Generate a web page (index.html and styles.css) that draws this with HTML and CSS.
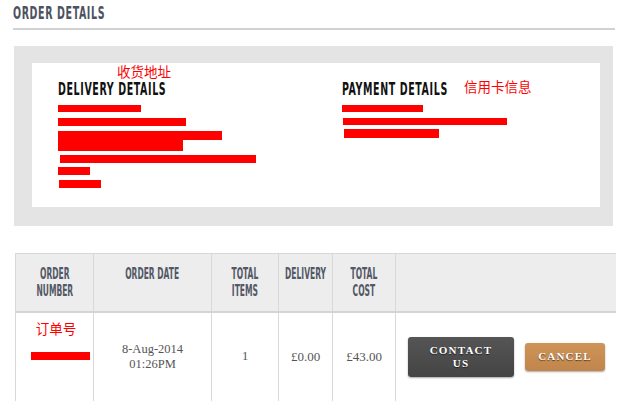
FILE: index.html
```html
<!DOCTYPE html>
<html>
<head>
<meta charset="utf-8">
<link rel="stylesheet" href="styles.css">
</head>
<body>
<div class="page">
  <h1 class="title"><span class="cond">ORDER DETAILS</span></h1>
  <div class="rule"></div>

  <section class="details">
    <div class="card">
      <div class="col delivery">
        <h2 class="heading"><span class="cond">DELIVERY DETAILS</span><span class="note note-abs">收货地址</span></h2>
        <div class="lines">
          <div class="bar b1"></div>
          <div class="bar b2"></div>
          <div class="bar b3"></div>
          <div class="bar b4"></div>
          <div class="bar b5"></div>
          <div class="bar b6"></div>
          <div class="bar b7"></div>
        </div>
      </div>
      <div class="col payment">
        <h2 class="heading"><span class="cond">PAYMENT DETAILS</span><span class="note note-side">信用卡信息</span></h2>
        <div class="lines">
          <div class="bar p1"></div>
          <div class="bar p2"></div>
          <div class="bar p3"></div>
        </div>
      </div>
    </div>
  </section>

  <table class="orders">
    <thead>
      <tr>
        <th class="c1"><div class="hcell"><span class="cond">ORDER<br>NUMBER</span></div></th>
        <th class="c2"><div class="hcell"><span class="cond">ORDER DATE</span></div></th>
        <th class="c3"><div class="hcell"><span class="cond">TOTAL<br>ITEMS</span></div></th>
        <th class="c4"><div class="hcell"><span class="cond">DELIVERY</span></div></th>
        <th class="c5"><div class="hcell"><span class="cond">TOTAL<br>COST</span></div></th>
        <th class="c6"></th>
      </tr>
    </thead>
    <tbody>
      <tr>
        <td class="c1 num-cell">
          <div class="num-stack">
            <span class="note">订单号</span>
            <div class="bar onum"></div>
          </div>
        </td>
        <td class="c2">8-Aug-2014<br>01:26PM</td>
        <td class="c3">1</td>
        <td class="c4">£0.00</td>
        <td class="c5">£43.00</td>
        <td class="c6">
          <div class="actions">
            <button class="btn btn-dark">CONTACT<br>US</button>
            <button class="btn btn-tan">CANCEL</button>
          </div>
        </td>
      </tr>
    </tbody>
  </table>
</div>
</body>
</html>
```

FILE: styles.css
```css
* { box-sizing: border-box; }
html, body { margin: 0; padding: 0; background: #fff; }
body { font-family: "Liberation Serif", serif; overflow: hidden; }

.page { padding: 0 16px 0 13px; width: 631px; }

.cond {
  display: inline-block;
  font-family: "Liberation Sans Narrow", "DejaVu Sans Condensed", "Liberation Sans", sans-serif;
  font-weight: bold;
  transform: scaleX(0.62);
}

.title {
  margin: 0;
  padding-top: 3px;
  height: 28px;
  font-size: 17px;
  line-height: 20px;
  color: #4c5260;
  font-weight: bold;
  letter-spacing: 1px;
  white-space: nowrap;
}
.title .cond { transform-origin: left center; }

.rule { height: 2px; background: #d2d2d2; }

.details {
  margin: 16px 2px 0 1px;
  background: #e4e4e4;
  padding: 17px 13px 19px 18px;
}
.card {
  background: #fff;
  height: 144px;
  display: flex;
  padding: 15px 0 0 26px;
}
.col { position: relative; }
.delivery { width: 284px; }
.heading {
  margin: 0;
  font-size: 17px;
  line-height: 22px;
  color: #111;
  letter-spacing: 1px;
  white-space: nowrap;
  position: relative;
}
.heading .cond { transform-origin: left center; }
.note {
  font-family: "Noto Sans CJK SC", sans-serif;
  color: #f00;
  font-size: 13.5px;
  font-weight: normal;
  letter-spacing: 0;
}
.note-abs { position: absolute; left: 59px; top: -15px; line-height: 16px; }
.note-side { position: absolute; left: 122px; top: 0; line-height: 16px; }

.lines { display: flex; flex-direction: column; padding-top: 3px; }
.bar { background: #f00; }
.b1 { width: 83px; height: 7px; margin-top: 1px; }
.b2 { width: 128px; height: 8px; margin-top: 6px; }
.b3 { width: 164px; height: 9px; margin-top: 5px; }
.b4 { width: 125px; height: 11px; }
.b5 { width: 196px; height: 8px; margin: 4px 0 0 2px; }
.b6 { width: 32px; height: 8px; margin-top: 4px; }
.b7 { width: 42px; height: 8px; margin: 5px 0 0 1px; }
.p1 { width: 81px; height: 7px; margin-top: 1px; }
.p2 { width: 164px; height: 7px; margin: 6px 0 0 1px; }
.p3 { width: 95px; height: 9px; margin: 4px 0 0 2px; }

.orders {
  margin: 27px 0 0 2px;
  border-collapse: collapse;
  width: 600px;
  table-layout: fixed;
}
.orders th {
  background: #ededed;
  color: #525866;
  font-size: 15px;
  line-height: 17px;
  font-weight: bold;
  height: 58px;
  vertical-align: top;
  padding: 12px 0 0;
  text-align: center;
  border: 1px solid #d8d8d8;
  border-bottom: 2px solid #d4d4d4;
  white-space: nowrap;
}
.hcell { display: flex; justify-content: center; }
.orders th .cond { transform: scaleX(0.56); flex: none; }
.orders td {
  height: 90px;
  border: 1px solid #d8d8d8;
  border-top: none;
  text-align: center;
  vertical-align: middle;
  font-size: 12.5px;
  line-height: 15px;
  color: #555;
  padding: 0;
}
.c1 { width: 78px; }
.c2 { width: 118px; }
.c3 { width: 67px; }
.c4 { width: 54px; }
.c5 { width: 63px; }
.c6 { width: 220px; border-right: none !important; }
.orders td.c4, .orders td.c5 { font-size: 13px; }

.orders td.num-cell { vertical-align: top; }
.num-stack {
  display: flex;
  flex-direction: column;
  align-items: center;
  padding-top: 7px;
}
.num-stack .note { font-size: 13.5px; line-height: 17px; margin-left: 3px; }
.onum { width: 59px; height: 8px; margin: 15px 0 0 12px; }

.actions {
  display: flex;
  align-items: center;
  padding-left: 12px;
  gap: 11px;
}
.btn {
  border: none;
  font-family: "Liberation Serif", serif;
  font-weight: bold;
  color: #fff;
  font-size: 11px;
  letter-spacing: 1.2px;
  line-height: 13px;
  text-shadow: 0 1px 1px rgba(0,0,0,0.6);
  border-radius: 3px;
  box-shadow: 0 1px 2px rgba(0,0,0,0.35);
  padding: 0;
}
.btn-dark {
  width: 106px;
  height: 40px;
  background: linear-gradient(#555, #444);
}
.btn-tan {
  width: 80px;
  height: 28px;
  background: linear-gradient(#cf9458, #c0854c);
}
```
